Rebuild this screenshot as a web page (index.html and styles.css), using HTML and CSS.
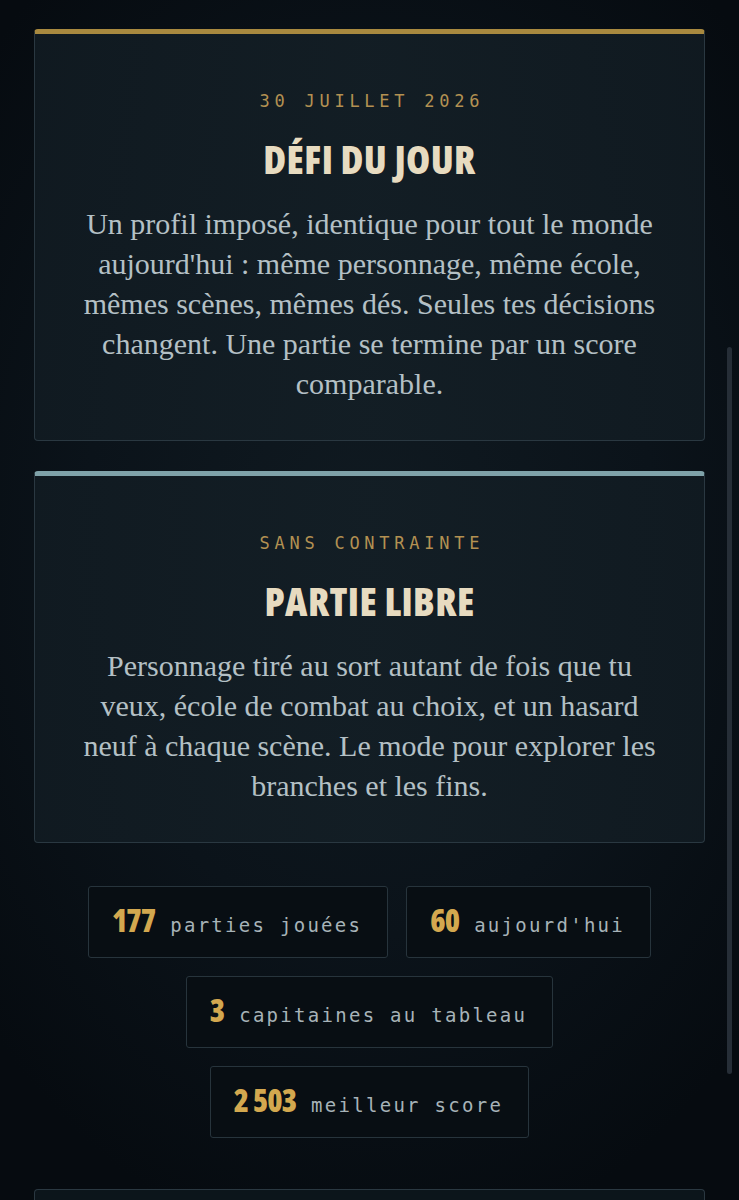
FILE: index.html
```html
<!DOCTYPE html>
<html lang="fr">
<head>
<meta charset="utf-8">
<title>Modes de jeu</title>
<link rel="stylesheet" href="styles.css">
</head>
<body>
<main class="page">
  <section class="card card-gold">
    <p class="kicker">30 JUILLET 2026</p>
    <h2 class="title">DÉFI DU JOUR</h2>
    <p class="desc">Un profil imposé, identique pour tout le monde aujourd'hui : même personnage, même école, mêmes scènes, mêmes dés. Seules tes décisions changent. Une partie se termine par un score comparable.</p>
  </section>
  <section class="card card-teal">
    <p class="kicker">SANS CONTRAINTE</p>
    <h2 class="title">PARTIE LIBRE</h2>
    <p class="desc">Personnage tiré au sort autant de fois que tu veux, école de combat au choix, et un hasard neuf à chaque scène. Le mode pour explorer les branches et les fins.</p>
  </section>
  <ul class="stats">
    <li class="stat"><span class="num">177</span><span class="lbl">parties jouées</span></li>
    <li class="stat"><span class="num">60</span><span class="lbl">aujourd'hui</span></li>
    <li class="stat"><span class="num">3</span><span class="lbl">capitaines au tableau</span></li>
    <li class="stat"><span class="num">2 503</span><span class="lbl">meilleur score</span></li>
  </ul>
  <section class="card card-plain"></section>
</main>
<div class="scrollbar"></div>
</body>
</html>
```
FILE: styles.css
```css
html, body {
  margin: 0;
  padding: 0;
}
body {
  height: 1200px;
  background: radial-gradient(ellipse 70% 60% at 50% 45%, #101a21 0%, #0b131a 55%, #060b10 100%);
  background-color: #080e13;
  color: #b7c2c6;
  overflow: hidden;
}
.page {
  padding: 29px 34px 0;
  display: flex;
  flex-direction: column;
}
.card {
  position: relative;
  border: 1px solid #2a3841;
  border-radius: 4px;
  background: linear-gradient(90deg, rgba(17,27,34,0.9) 0%, rgba(19,30,37,0.95) 50%, rgba(17,27,34,0.9) 100%);
  padding: 54px 40px 36px;
  text-align: center;
  margin-bottom: 30px;
}
.card-gold { border-top: 5px solid #a8893f; }
.card-teal { border-top: 5px solid #7fa2a9; }
.card-plain {
  margin-top: 51px;
  height: 10px;
  padding: 0;
  border-bottom: none;
  border-radius: 4px 4px 0 0;
  background: #0c151b;
}
.kicker {
  margin: 0;
  font-family: "DejaVu Sans Mono", monospace;
  font-size: 17px;
  letter-spacing: 0.28em;
  line-height: 26px;
  color: #b39152;
  padding-left: 0.28em;
}
.title {
  margin: 23px 0 0;
  font-family: "Open Sans", sans-serif;
  font-stretch: 75%;
  font-weight: 800;
  font-size: 39px;
  line-height: 44px;
  letter-spacing: 0.01em;
  color: #e7dbc0;
}
.desc {
  margin: 23px 0 0;
  font-family: "Liberation Serif", serif;
  font-size: 30px;
  line-height: 40px;
  color: #b4c0c5;
}
.stats {
  list-style: none;
  margin: 13px 0 0;
  padding: 0;
  display: flex;
  flex-wrap: wrap;
  justify-content: center;
  gap: 18px 18px;
}
.stat {
  display: flex;
  align-items: baseline;
  gap: 15px;
  height: 72px;
  box-sizing: border-box;
  padding: 18px 25px 0 23px;
  border: 1px solid #27343c;
  border-radius: 3px;
  background: #080e13;
}
.num {
  font-family: "Open Sans", sans-serif;
  font-stretch: 75%;
  font-weight: 800;
  font-size: 31px;
  line-height: 1;
  letter-spacing: -0.03em;
  color: #d3a84f;
}
.lbl {
  font-family: "DejaVu Sans Mono", monospace;
  font-size: 19px;
  line-height: 1;
  letter-spacing: 0.12em;
  color: #a7b3b8;
}
.scrollbar {
  position: fixed;
  top: 347px;
  right: 7px;
  width: 5px;
  height: 727px;
  border-radius: 3px;
  background: #262e37;
}
```
